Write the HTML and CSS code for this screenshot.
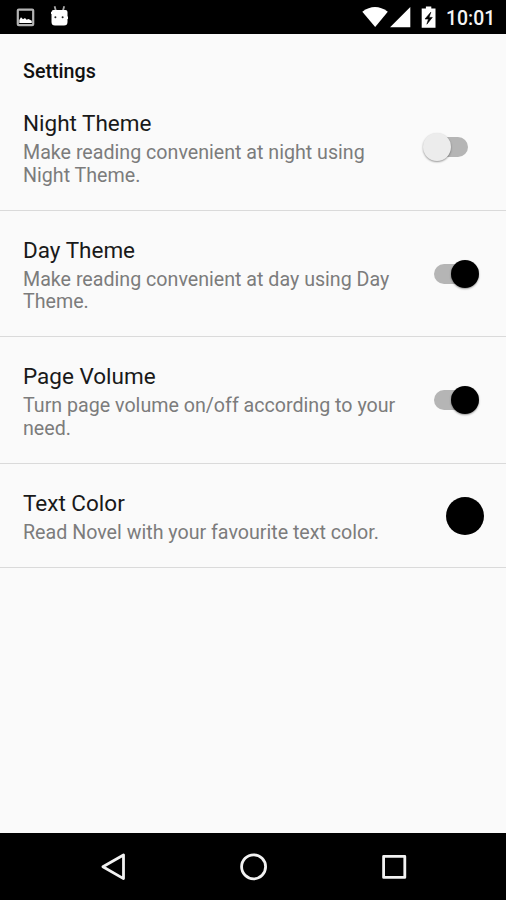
FILE: index.html
```html
<!DOCTYPE html>
<html lang="en">
<head>
<meta charset="utf-8">
<title>Settings</title>
<link rel="stylesheet" href="styles.css">
</head>
<body>
<div class="screen">
  <header class="status">
    <svg class="status-left" width="70" height="34" viewBox="0 0 70 34">
      <rect x="17.8" y="9.6" width="15.4" height="15.6" rx="1" fill="none" stroke="#b4b4b4" stroke-width="2.2"/>
      <path d="M19.300 23V20l1.700-2.700 2 2 2-1.300 1.600 1.800 1.900-.8 3.300 1.800V23z" fill="#fff"/>
      <path d="M54.600 6.300l1.200 4.200M64.200 6.300l-1.200 4.200" stroke="#aaa" stroke-width="1.800"/>
      <path d="M53.500 10h12q2 0 2 2v4.500h.5v2.500h-.5v3q0 3.500-3.500 3.500h-9q-3.500 0-3.500-3.500v-8h-.5v-2h.5q0-2 2-2z" fill="#fff"/>
      <circle cx="55.400" cy="17.200" r="1" fill="#222"/><circle cx="62.600" cy="17.200" r="1" fill="#222"/>
    </svg>
    <svg class="status-right" width="78" height="34" viewBox="362 0 78 34">
      <path d="M362.300 11.700Q375 2.500 387.800 11.700L375.200 27z" fill="#fff"/>
      <path d="M410.300 7v20.300h-20.200z" fill="#fff"/>
      <path d="M425.900 6.500h5.400v1.900h4.200v19.400h-13.800V8.400h4.200z" fill="#fff"/>
      <path d="M430.800 12.200l-5.800 6.800h3.500l-1.600 5.200 5.400-6.800h-3.300l1.800-5.200z" fill="#000" stroke="#000" stroke-width=".6"/>
    </svg>
    <span class="clock">10:01</span>
  </header>
  <main class="content">
    <h1 class="heading">Settings</h1>
    <section class="row">
      <div class="copy"><h2>Night Theme</h2><p>Make reading convenient at night using Night Theme.</p></div>
      <div class="switch off"><span class="thumb"></span></div>
    </section>
    <section class="row">
      <div class="copy"><h2>Day Theme</h2><p>Make reading convenient at day using Day Theme.</p></div>
      <div class="switch"><span class="thumb"></span></div>
    </section>
    <section class="row">
      <div class="copy"><h2>Page Volume</h2><p>Turn page volume on/off according to your need.</p></div>
      <div class="switch"><span class="thumb"></span></div>
    </section>
    <section class="row short">
      <div class="copy"><h2>Text Color</h2><p>Read Novel with your favourite text color.</p></div>
      <div class="swatch"></div>
    </section>
  </main>
  <nav class="nav">
    <svg width="506" height="67" viewBox="0 833 506 67" fill="none" stroke="#f2f2f2" stroke-width="2.800" stroke-linejoin="round">
      <path d="M102.900 866.800L123.500 855v23.600z"/>
      <circle cx="253.600" cy="866.800" r="12"/>
      <rect x="383.600" y="856.400" width="21.200" height="21"/>
    </svg>
  </nav>
</div>
</body>
</html>
```
FILE: styles.css
```css
* { box-sizing: border-box; margin: 0; padding: 0; }
body { background: #fafafa; font-family: Roboto, sans-serif; overflow: hidden; }
.screen { width: 506px; height: 900px; display: flex; flex-direction: column; }
svg { display: block; }
.status { height: 34px; background: #000; display: flex; align-items: center; padding-right: 11px; }
.status-right { margin-left: auto; }
.clock { color: #f4f4f4; font-size: 19.4px; font-weight: 500; width: 49px; margin-left: 6px; line-height: 34px; padding-top: 3px; }
.content { flex: 1; background: #fafafa; }
.heading { font-size: 19.7px; font-weight: 500; line-height: 24px; color: #111; padding: 26px 23px 0; height: 50px; }
.row { display: flex; justify-content: space-between; height: 126.6px; padding: 26px 22px 0 23px; border-bottom: 1px solid #dadada; }
.row.short { height: 104px; }
.copy { width: 380px; }
h2 { font-size: 22.5px; font-weight: 400; line-height: 27px; color: #191919; }
p { font-size: 19.65px; line-height: 22.7px; color: #7c7c7c; padding-top: 5px; }
.switch { position: relative; width: 34px; height: 20px; border-radius: 10px; background: #b5b5b5; margin: 27px 16px 0 0; }
.thumb { position: absolute; width: 28px; height: 28px; border-radius: 50%; left: 17px; top: -4px; background: #000; box-shadow: 0 1px 2px #0006; }
.off .thumb { left: -11px; background: #ececec; }
.swatch { width: 38px; height: 38px; border-radius: 50%; background: #000; margin-top: 7px; }
.nav { height: 67px; background: #000; }
```
